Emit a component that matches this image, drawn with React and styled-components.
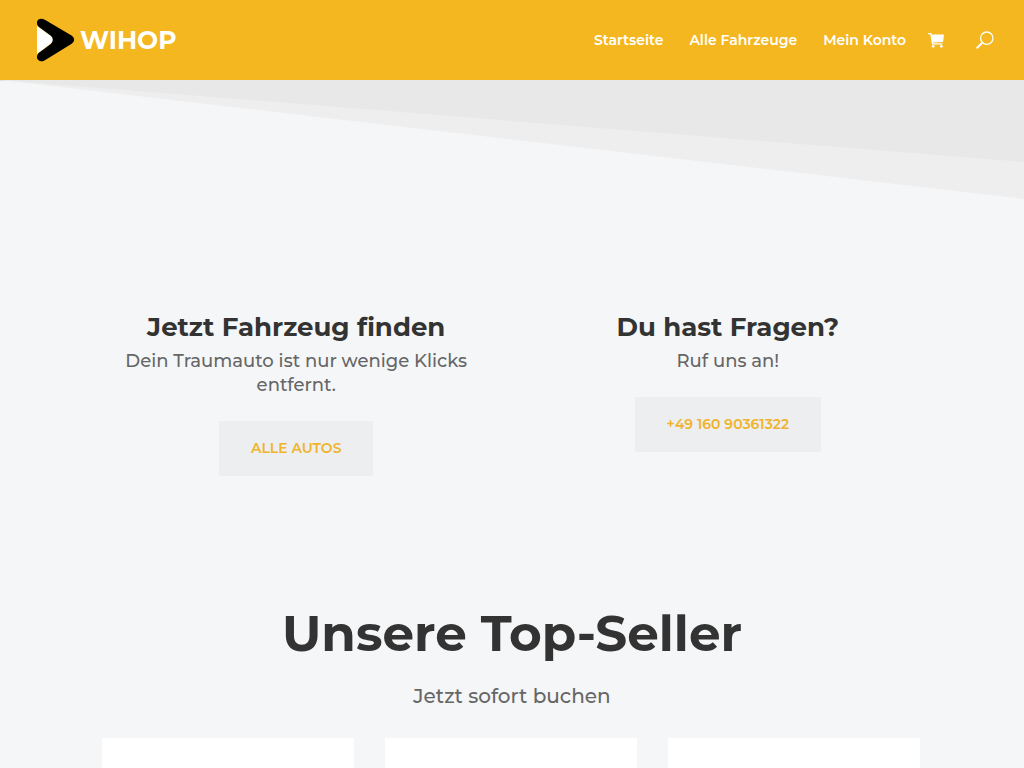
import React from 'react';
import styled, { createGlobalStyle } from 'styled-components';

const GlobalStyle = createGlobalStyle`
  * {
    box-sizing: border-box;
  }

  body {
    margin: 0;
    background: #f5f6f8;
    color: #666;
    font-family: Montserrat, Inter, sans-serif;
    font-size: 14px;
    font-weight: 500;
  }
`;

const Page = styled.div`
  display: flex;
  flex-direction: column;
  min-height: 100vh;
`;

const Header = styled.header`
  display: flex;
  align-items: center;
  justify-content: space-between;
  height: 80px;
  padding: 0 30px 0 36px;
  background: #f4b71f;
  box-shadow: 0 1px 0 rgba(0, 0, 0, 0.1);
`;

const Logo = styled.a`
  display: flex;
  align-items: center;
  gap: 4px;
  color: #fff;
  font-size: 25px;
  font-weight: 700;
  line-height: 44px;
  text-decoration: none;
`;

const Nav = styled.nav`
  display: flex;
  align-items: center;
  gap: 22px;
`;

const Menu = styled.div`
  display: flex;
  gap: 26px;
`;

const NavLink = styled.a`
  display: flex;
  color: #fff;
  font-size: 14px;
  font-weight: 600;
  line-height: 20px;
  text-decoration: none;
`;

const SearchButton = styled.button`
  display: flex;
  margin-left: 10px;
  padding: 0;
  border: 0;
  background: none;
  color: #fff;
  cursor: pointer;
`;

const Main = styled.main`
  display: flex;
  flex: 1;
  flex-direction: column;
`;

const Divider = styled.svg`
  display: block;
  width: 100%;
  height: 120px;
`;

const Container = styled.div`
  width: 80%;
  max-width: 1080px;
  margin: 0 auto;
`;

const Columns = styled(Container)`
  display: grid;
  grid-template-columns: 1fr 1fr;
  gap: 44px;
  padding: 114px 0 133px;
`;

const TopSeller = styled(Container)`
  display: flex;
  flex: 1;
  flex-direction: column;
`;

const Promo = styled.section`
  display: flex;
  flex-direction: column;
  align-items: center;
  text-align: center;
`;

const PromoTitle = styled.h2`
  margin: 0 0 9px;
  color: #333;
  font-size: 26px;
  font-weight: 700;
  line-height: 26px;
`;

const PromoText = styled.p`
  margin: 0 0 24px;
  font-size: 18px;
  line-height: 24px;
`;

const PromoButton = styled.a`
  padding: 17px 32px;
  background: #eceeef;
  color: #f0b42c;
  font-size: 14px;
  font-weight: 600;
  line-height: 21px;
  text-decoration: none;
`;

const SectionTitle = styled.h1`
  margin: 0 0 25px;
  color: #333;
  font-size: 50px;
  font-weight: 700;
  line-height: 50px;
  text-align: center;
`;

const SectionText = styled.p`
  margin: 0 0 30px;
  font-size: 20px;
  line-height: 24px;
  text-align: center;
`;

const Products = styled.ul`
  display: grid;
  flex: 1;
  grid-template-columns: repeat(3, 30.75%);
  column-gap: 3.8%;
  margin: 0;
  padding: 0;
  list-style: none;
`;

const Product = styled.li`
  background: #fff;
`;

function LogoMark() {
  return (
    <svg width="40" height="44" viewBox="0 0 40 44" aria-hidden="true">
      <path d="M1 8 L20 21.5 L1 36 Z" fill="#fff" />
      <path
        d="M2.2 1.8 C4 .4 6.2 .4 8.4 1.6 L35.5 17.6 C39 19.8 39 23.6 35.7 25.8 L8.5 42.4 C6.2 43.7 3.8 43.6 2.3 42.1 C.5 40.3 .6 36.6 3 34.8 L14.2 26.4 C17.6 23.8 17.6 19.6 14.2 17.2 L3 9 C.6 7.2 .4 3.5 2.2 1.8 Z"
        fill="#000"
      />
    </svg>
  );
}

function CartIcon() {
  return (
    <svg width="16" height="15" viewBox="0 0 16 15" fill="#fff" aria-hidden="true">
      <path d="M.6 0h2.2c.4 0 .6.2.7.6l.2.8h11.5c.5 0 .8.4.7.8l-.7 6c-.1.4-.4.7-.8.7L4.9 9.4l.2.9h9.3v1.2H4.6c-.4 0-.6-.2-.7-.6L2.3 1.3H.6C.2 1.3 0 1 0 .7 0 .3.2 0 .6 0z" />
      <circle cx="5.2" cy="13.3" r="1.4" />
      <circle cx="13.4" cy="13.3" r="1.4" />
    </svg>
  );
}

function SearchIcon() {
  return (
    <svg width="18" height="18" viewBox="0 0 18 18" fill="none" stroke="#fff" aria-hidden="true">
      <circle cx="10.8" cy="7.2" r="6.2" strokeWidth="1.3" />
      <path d="M6.3 11.7 1.2 16.8" strokeWidth="2" strokeLinecap="round" />
    </svg>
  );
}

const links = ['Startseite', 'Alle Fahrzeuge', 'Mein Konto'];
const products = [1, 2, 3];

export default function App() {
  return (
    <Page>
      <GlobalStyle />
      <Header>
        <Logo href="#">
          <LogoMark />
          WIHOP
        </Logo>
        <Nav>
          <Menu>
            {links.map((link) => (
              <NavLink key={link} href="#">{link}</NavLink>
            ))}
          </Menu>
          <NavLink href="#" aria-label="Warenkorb">
            <CartIcon />
          </NavLink>
          <SearchButton type="button" aria-label="Suche">
            <SearchIcon />
          </SearchButton>
        </Nav>
      </Header>
      <Main>
        <Divider viewBox="0 0 1024 120" preserveAspectRatio="none" aria-hidden="true">
          <path d="M0 0H1024V119Z" fill="#eeeeee" />
          <path d="M0 0H1024V82Z" fill="#e8e8e8" />
        </Divider>
        <Columns>
          <Promo>
            <PromoTitle>Jetzt Fahrzeug finden</PromoTitle>
            <PromoText>Dein Traumauto ist nur wenige Klicks entfernt.</PromoText>
            <PromoButton href="#">ALLE AUTOS</PromoButton>
          </Promo>
          <Promo>
            <PromoTitle>Du hast Fragen?</PromoTitle>
            <PromoText>Ruf uns an!</PromoText>
            <PromoButton href="tel:+4916090361322">+49 160 90361322</PromoButton>
          </Promo>
        </Columns>
        <TopSeller>
          <SectionTitle>Unsere Top-Seller</SectionTitle>
          <SectionText>Jetzt sofort buchen</SectionText>
          <Products>
            {products.map((id) => (
              <Product key={id} />
            ))}
          </Products>
        </TopSeller>
      </Main>
    </Page>
  );
}
